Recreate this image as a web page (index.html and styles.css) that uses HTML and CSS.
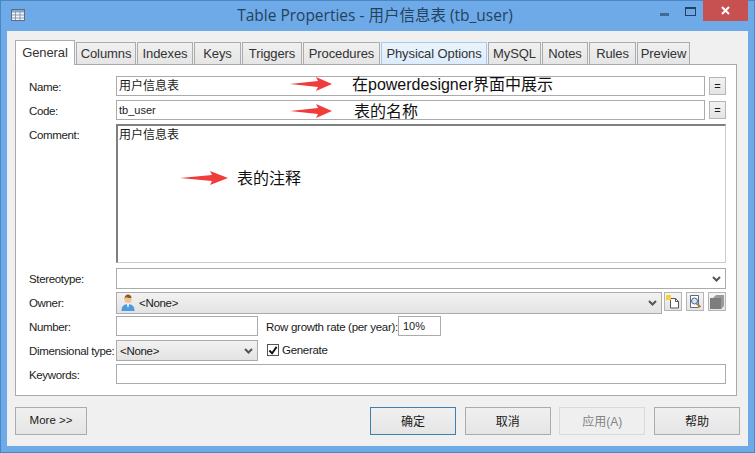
FILE: index.html
```html
<!DOCTYPE html>
<html lang="en">

<head>
    <meta charset="UTF-8">
    <title>Table Properties</title>
    <link rel="stylesheet" href="styles.css">
</head>

<body>
    <div class="window">
        <div class="titlebar">
            <svg class="app-icon" width="14" height="12" viewBox="0 0 14 12">
                <rect x="0.5" y="0.5" width="13" height="11" fill="#f4f7fb" stroke="#5d6f86"/>
                <rect x="1" y="1" width="12" height="2.5" fill="#8ea6c6"/>
                <path d="M1 6h12M1 9h12M4.5 3v8M9 3v8" stroke="#8b9ab0" fill="none"/>
            </svg>
            <div class="title">Table Properties - 用户信息表 (tb_user)</div>
            <div class="controls">
                <div class="ctl-min"></div>
                <div class="ctl-max"></div>
                <div class="ctl-close">
                    <svg width="9" height="9" viewBox="0 0 9 9">
                        <path d="M1 1l7 7M8 1l-7 7" stroke="#fff" stroke-width="2" fill="none"/>
                    </svg>
                </div>
            </div>
        </div>
        <div class="client">
            <div class="tabs">
                <div class="tab tab-general active">General</div>
                <div class="tab tab-columns">Columns</div>
                <div class="tab tab-indexes">Indexes</div>
                <div class="tab tab-keys">Keys</div>
                <div class="tab tab-triggers">Triggers</div>
                <div class="tab tab-procedures">Procedures</div>
                <div class="tab tab-physical hover">Physical Options</div>
                <div class="tab tab-mysql">MySQL</div>
                <div class="tab tab-notes">Notes</div>
                <div class="tab tab-rules">Rules</div>
                <div class="tab tab-preview">Preview</div>
            </div>
            <div class="panel">
                <div class="row">
                    <label class="field-label">Name:</label>
                    <div class="annotated grow">
                        <div class="input">用户信息表</div>
                        <svg class="arrow arrow-name" width="42" height="14" viewBox="0 0 42 14">
                            <polygon points="0,7 28,4 26,0 42,7 26,14 28,10" fill="#f13c3c"/>
                        </svg>
                        <span class="note note-name">在powerdesigner界面中展示</span>
                    </div>
                    <div class="eq-btn">=</div>
                </div>
                <div class="row">
                    <label class="field-label">Code:</label>
                    <div class="annotated grow">
                        <div class="input input-latin">tb_user</div>
                        <svg class="arrow arrow-code" width="42" height="14" viewBox="0 0 42 14">
                            <polygon points="0,7 28,4 26,0 42,7 26,14 28,10" fill="#f13c3c"/>
                        </svg>
                        <span class="note note-code">表的名称</span>
                    </div>
                    <div class="eq-btn">=</div>
                </div>
                <div class="row row-comment">
                    <label class="field-label">Comment:</label>
                    <div class="annotated grow">
                        <div class="textarea">用户信息表</div>
                        <svg class="arrow arrow-comment" width="48" height="14" viewBox="0 0 48 14">
                            <polygon points="0,7 32,4 30,0 48,7 30,14 32,10" fill="#f13c3c"/>
                        </svg>
                        <span class="note note-comment">表的注释</span>
                    </div>
                </div>
                <div class="row">
                    <label class="field-label">Stereotype:</label>
                    <div class="combo combo-plain grow">
                        <span></span>
                        <svg class="chevron" width="9" height="6" viewBox="0 0 9 6">
                            <path d="M1 1l3.5 3.5L8 1" stroke="#555" stroke-width="2" fill="none"/>
                        </svg>
                    </div>
                </div>
                <div class="row">
                    <label class="field-label">Owner:</label>
                    <div class="combo combo-owner grow">
                        <svg class="person" width="14" height="18" viewBox="0 0 14 18">
                            <path d="M0.5 17c0-5 2.500-7 6.500-7s6.500 2 6.500 7z" fill="#4a9be0"/>
                            <path d="M5.500 10l1.500 4 1.500-4z" fill="#e9f3fb"/>
                            <circle cx="7" cy="5.500" r="3.500" fill="#f1c38e"/>
                            <path d="M3.500 5c0-3 1.500-4.500 3.500-4.500S10.500 2 10.500 4C8.500 4 6 4 5 3z" fill="#8a5a24"/>
                        </svg>
                        <span>&lt;None&gt;</span>
                        <svg class="chevron" width="9" height="6" viewBox="0 0 9 6">
                            <path d="M1 1l3.500 3.500L8 1" stroke="#555" stroke-width="2" fill="none"/>
                        </svg>
                    </div>
                    <div class="tool-btns">
                        <div class="tool-btn">
                            <svg width="14" height="14" viewBox="0 0 14 14">
                                <path d="M4.500 3.500h5l3 3v6.500h-8z" fill="#fff" stroke="#555"/>
                                <path d="M9.500 3.500v3h3" fill="none" stroke="#555"/>
                                <rect x="0" y="0" width="5" height="5" fill="#f3d23c"/>
                            </svg>
                        </div>
                        <div class="tool-btn">
                            <svg width="14" height="14" viewBox="0 0 14 14">
                                <path d="M2.500 0.500h8v12h-8z" fill="#fff" stroke="#667"/>
                                <circle cx="6.500" cy="6" r="3" fill="#cfe3f5" stroke="#3f6c96"/>
                                <path d="M8.500 8.500l4 3.500" stroke="#a9803c" stroke-width="2"/>
                            </svg>
                        </div>
                        <div class="tool-btn tool-disabled">
                            <svg width="14" height="14" viewBox="0 0 14 14">
                                <rect x="0" y="3" width="11" height="11" fill="#7d7d7d"/>
                                <path d="M3 3l3-3h8v11l-3 3V3z" fill="#9a9a9a"/>
                            </svg>
                        </div>
                    </div>
                </div>
                <div class="row">
                    <label class="field-label">Number:</label>
                    <div class="input input-number"></div>
                    <label class="growth-label">Row growth rate (per year):</label>
                    <div class="input input-latin input-growth">10%</div>
                </div>
                <div class="row">
                    <label class="field-label">Dimensional type:</label>
                    <div class="combo combo-dim">
                        <span>&lt;None&gt;</span>
                        <svg class="chevron" width="9" height="6" viewBox="0 0 9 6">
                            <path d="M1 1l3.500 3.500L8 1" stroke="#555" stroke-width="2" fill="none"/>
                        </svg>
                    </div>
                    <div class="checkbox">
                        <svg width="11" height="11" viewBox="0 0 11 11">
                            <path d="M1.500 5.500l3 3 5-7" stroke="#111" stroke-width="2" fill="none"/>
                        </svg>
                    </div>
                    <label class="check-label">Generate</label>
                </div>
                <div class="row">
                    <label class="field-label">Keywords:</label>
                    <div class="input grow"></div>
                </div>
            </div>
            <div class="footer">
                <button class="btn btn-more">More &gt;&gt;</button>
                <div class="footer-right">
                    <button class="btn btn-default">确定</button>
                    <button class="btn">取消</button>
                    <button class="btn btn-disabled">应用(A)</button>
                    <button class="btn">帮助</button>
                </div>
            </div>
        </div>
    </div>
</body>

</html>
```

FILE: styles.css
```css
* {
    box-sizing: border-box;
}

body {
    margin: 0;
    font-family: "Liberation Sans", "Noto Sans CJK SC", sans-serif;
    font-size: 12px;
    color: #1a1a1a;
    background-color: #6eaae8;
}

.window {
    width: 755px;
    height: 453px;
    padding: 0 7px 7px;
    background-color: #6eaae8;
    box-shadow: inset 0 0 0 1px #4a86c4;
    display: flex;
    flex-direction: column;
    overflow: hidden;
}

.titlebar {
    height: 31px;
    flex-shrink: 0;
    display: flex;
    align-items: flex-start;
    margin: 0 -7px;
    padding-left: 11px;
}

.app-icon {
    margin-top: 9px;
}

.title {
    flex-grow: 1;
    text-align: center;
    font-family: "Open Sans", "Noto Sans CJK SC", sans-serif;
    font-size: 15.5px;
    line-height: 30px;
    color: #24425e;
    padding-left: 65px;
}

.controls {
    display: flex;
    align-items: flex-start;
    padding-right: 7px;
}

.ctl-min {
    width: 9px;
    height: 3px;
    margin: 13px 16px 0 0;
    background-color: #3e6a94;
}

.ctl-max {
    width: 11px;
    height: 9px;
    margin: 7px 7px 0 0;
    border: 1px solid #24425e;
    border-top-width: 2px;
}

.ctl-close {
    width: 45px;
    height: 21px;
    background-color: #c75050;
    display: flex;
    align-items: center;
    justify-content: center;
}

.client {
    flex-grow: 1;
    background-color: #f0f0f0;
    padding: 9px 7px 0 8px;
    display: flex;
    flex-direction: column;
}

.tabs {
    display: flex;
    align-items: flex-end;
    height: 24px;
    position: relative;
    z-index: 1;
}

.tab {
    height: 22px;
    margin-right: 1px;
    border: 1px solid #acacac;
    border-bottom: none;
    background: linear-gradient(#f0f0f0, #e5e5e5);
    text-align: center;
    line-height: 22px;
    font-size: 13px;
    letter-spacing: -0.1px;
    color: #333;
}

.tab.active {
    height: 25px;
    margin-bottom: -1px;
    background: #fff;
    line-height: 24px;
}

.tab.hover {
    background: linear-gradient(#ecf4fc, #dcecfc);
    border-color: #a9cbea;
}

.tab-general { width: 60px; }
.tab-columns { width: 60px; }
.tab-indexes { width: 56px; }
.tab-keys { width: 47px; }
.tab-triggers { width: 60px; }
.tab-procedures { width: 77px; }
.tab-physical { width: 106px; }
.tab-mysql { width: 53px; }
.tab-notes { width: 46px; }
.tab-rules { width: 47px; }
.tab-preview { width: 53px; }

.panel {
    width: 722px;
    height: 332px;
    background-color: #fff;
    border: 1px solid #a9a9a9;
    padding: 11px 10px 0 13px;
}

.row {
    display: flex;
    align-items: flex-start;
    height: 24px;
}

.row-comment {
    height: 144px;
}

.field-label {
    width: 87px;
    flex-shrink: 0;
    line-height: 23px;
    font-size: 11.5px;
    letter-spacing: -0.35px;
    white-space: nowrap;
    color: #222;
}

.grow {
    flex-grow: 1;
    min-width: 0;
}

.annotated {
    position: relative;
}

.input {
    height: 20px;
    border: 1px solid #ababab;
    background-color: #fff;
    padding-left: 2px;
    line-height: 19px;
    font-size: 12px;
}

.input-latin {
    font-size: 11px;
}

.input-number {
    width: 142px;
}

.input-growth {
    width: 43px;
    padding-left: 4px;
}

.growth-label {
    margin-left: 8px;
    width: 132px;
    font-size: 11.5px;
    line-height: 22px;
    letter-spacing: -0.3px;
    white-space: nowrap;
}

.textarea {
    height: 139px;
    border: 1px solid #ccc;
    border-top: 2px solid #808080;
    border-left: 2px solid #808080;
    padding-left: 1px;
    line-height: 18px;
}

.eq-btn {
    width: 17px;
    height: 18px;
    margin: 1px 0 0 4px;
    border: 1px solid #b5b5b5;
    background: linear-gradient(#f2f2f2, #e4e4e4);
    text-align: center;
    line-height: 16px;
    font-size: 11px;
}

.combo {
    display: flex;
    align-items: center;
    justify-content: space-between;
    border: 1px solid #ababab;
    padding: 0 4px;
    font-size: 11.5px;
    letter-spacing: -0.3px;
}

.combo-plain {
    height: 21px;
    background-color: #fff;
}

.combo-owner {
    height: 22px;
    background: linear-gradient(#f2f2f2, #e3e3e3);
    justify-content: flex-start;
    margin-right: 2px;
}

.combo-owner .person {
    margin-right: 4px;
}

.combo-owner .chevron {
    margin-left: auto;
}

.combo-dim {
    width: 142px;
    height: 21px;
    padding-left: 3px;
    background: linear-gradient(#f2f2f2, #e3e3e3);
}

.tool-btns {
    display: flex;
    gap: 4px;
}

.tool-btn {
    width: 18px;
    height: 19px;
    border: 1px solid #b5b5b5;
    background: linear-gradient(#f5f5f5, #e4e4e4);
    display: flex;
    align-items: center;
    justify-content: center;
}

.checkbox {
    width: 12px;
    height: 12px;
    margin: 4px 3px 0 9px;
    border: 1px solid #555;
    background-color: #fff;
    display: flex;
    align-items: center;
    justify-content: center;
}

.check-label {
    font-size: 11.5px;
    line-height: 20px;
    letter-spacing: -0.3px;
}

.arrow {
    position: absolute;
}

.arrow-name {
    left: 174px;
    top: 1px;
}

.arrow-code {
    left: 174px;
    top: 4px;
}

.arrow-comment {
    left: 64px;
    top: 47px;
}

.note {
    position: absolute;
    font-size: 16px;
    line-height: 20px;
    color: #111;
    white-space: nowrap;
}

.note-name {
    left: 236px;
    top: -1px;
}

.note-code {
    left: 238px;
    top: 2px;
}

.note-comment {
    left: 121px;
    top: 45px;
}

.footer {
    display: flex;
    justify-content: space-between;
    padding-top: 11px;
}

.footer-right {
    display: flex;
    gap: 8.67px;
    margin-right: 1px;
}

.btn {
    width: 86px;
    height: 28px;
    padding: 0 0 2px;
    border: 1px solid #acacac;
    background: linear-gradient(#f0f0f0, #e5e5e5);
    font-family: "Liberation Sans", "Noto Sans CJK SC", sans-serif;
    font-size: 12px;
    color: #1a1a1a;
}

.btn-more {
    width: 72px;
    font-size: 11.5px;
}

.btn-default {
    border-color: #3c7fb1;
}

.btn-disabled {
    border-color: #d9d9d9;
    background: #efefef;
    color: #838383;
}
```
